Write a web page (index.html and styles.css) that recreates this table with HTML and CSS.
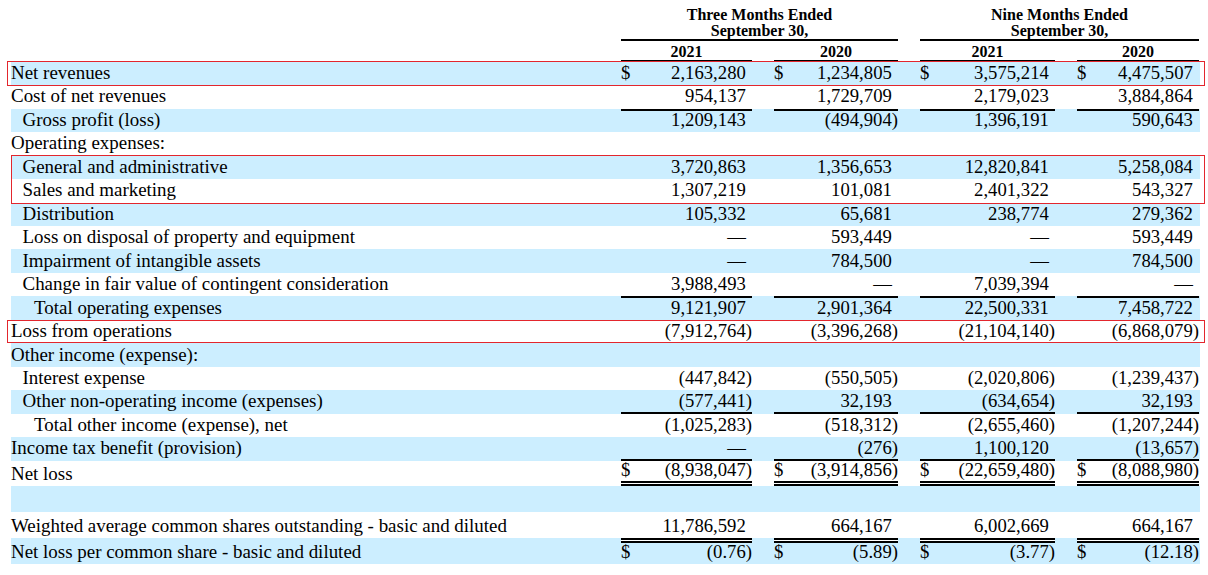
FILE: index.html
```html
<!DOCTYPE html>
<html lang="en">
<head>
<meta charset="utf-8">
<title>Condensed Consolidated Statements of Operations</title>
<link rel="stylesheet" href="styles.css">
</head>
<body>
<div class="sheet">
  <div class="row head">
    <div class="hd s1">Three Months Ended<br>September 30,</div>
    <div class="hd s2">Nine Months Ended<br>September 30,</div>
  </div>
  <div class="row years">
    <div class="yr c1">2021</div>
    <div class="yr c2">2020</div>
    <div class="yr c3">2021</div>
    <div class="yr c4">2020</div>
  </div>

  <div class="row shade box box-a">
    <div class="lbl">Net revenues</div>
    <div class="v c1"><span>$</span><span class="n">2,163,280</span></div>
    <div class="v c2"><span>$</span><span class="n">1,234,805</span></div>
    <div class="v c3"><span>$</span><span class="n">3,575,214</span></div>
    <div class="v c4"><span>$</span><span class="n">4,475,507</span></div>
  </div>
  <div class="row">
    <div class="lbl">Cost of net revenues</div>
    <div class="v c1"><span class="n">954,137</span></div>
    <div class="v c2"><span class="n">1,729,709</span></div>
    <div class="v c3"><span class="n">2,179,023</span></div>
    <div class="v c4"><span class="n">3,884,864</span></div>
  </div>
  <div class="row shade">
    <div class="lbl i1">Gross profit (loss)</div>
    <div class="v c1 lt"><span class="n">1,209,143</span></div>
    <div class="v c2 lt"><span class="n">(494,904<span class="rp">)</span></span></div>
    <div class="v c3 lt"><span class="n">1,396,191</span></div>
    <div class="v c4 lt"><span class="n">590,643</span></div>
  </div>
  <div class="row">
    <div class="lbl">Operating expenses:</div>
  </div>
  <div class="grp">
    <div class="row shade">
      <div class="lbl i1">General and administrative</div>
      <div class="v c1"><span class="n">3,720,863</span></div>
      <div class="v c2"><span class="n">1,356,653</span></div>
      <div class="v c3"><span class="n">12,820,841</span></div>
      <div class="v c4"><span class="n">5,258,084</span></div>
    </div>
    <div class="row">
      <div class="lbl i1">Sales and marketing</div>
      <div class="v c1"><span class="n">1,307,219</span></div>
      <div class="v c2"><span class="n">101,081</span></div>
      <div class="v c3"><span class="n">2,401,322</span></div>
      <div class="v c4"><span class="n">543,327</span></div>
    </div>
  </div>
  <div class="row shade">
    <div class="lbl i1">Distribution</div>
    <div class="v c1"><span class="n">105,332</span></div>
    <div class="v c2"><span class="n">65,681</span></div>
    <div class="v c3"><span class="n">238,774</span></div>
    <div class="v c4"><span class="n">279,362</span></div>
  </div>
  <div class="row">
    <div class="lbl i1">Loss on disposal of property and equipment</div>
    <div class="v c1"><span class="n">—</span></div>
    <div class="v c2"><span class="n">593,449</span></div>
    <div class="v c3"><span class="n">—</span></div>
    <div class="v c4"><span class="n">593,449</span></div>
  </div>
  <div class="row shade">
    <div class="lbl i1">Impairment of intangible assets</div>
    <div class="v c1"><span class="n">—</span></div>
    <div class="v c2"><span class="n">784,500</span></div>
    <div class="v c3"><span class="n">—</span></div>
    <div class="v c4"><span class="n">784,500</span></div>
  </div>
  <div class="row">
    <div class="lbl i1">Change in fair value of contingent consideration</div>
    <div class="v c1"><span class="n">3,988,493</span></div>
    <div class="v c2"><span class="n">—</span></div>
    <div class="v c3"><span class="n">7,039,394</span></div>
    <div class="v c4"><span class="n">—</span></div>
  </div>
  <div class="row shade">
    <div class="lbl i2">Total operating expenses</div>
    <div class="v c1 lt"><span class="n">9,121,907</span></div>
    <div class="v c2 lt"><span class="n">2,901,364</span></div>
    <div class="v c3 lt"><span class="n">22,500,331</span></div>
    <div class="v c4 lt"><span class="n">7,458,722</span></div>
  </div>
  <div class="row box box-c">
    <div class="lbl">Loss from operations</div>
    <div class="v c1"><span class="n">(7,912,764<span class="rp">)</span></span></div>
    <div class="v c2"><span class="n">(3,396,268<span class="rp">)</span></span></div>
    <div class="v c3"><span class="n">(21,104,140<span class="rp">)</span></span></div>
    <div class="v c4"><span class="n">(6,868,079<span class="rp">)</span></span></div>
  </div>
  <div class="row shade">
    <div class="lbl">Other income (expense):</div>
  </div>
  <div class="row">
    <div class="lbl i1">Interest expense</div>
    <div class="v c1"><span class="n">(447,842<span class="rp">)</span></span></div>
    <div class="v c2"><span class="n">(550,505<span class="rp">)</span></span></div>
    <div class="v c3"><span class="n">(2,020,806<span class="rp">)</span></span></div>
    <div class="v c4"><span class="n">(1,239,437<span class="rp">)</span></span></div>
  </div>
  <div class="row shade">
    <div class="lbl i1">Other non-operating income (expenses)</div>
    <div class="v c1 lb"><span class="n">(577,441<span class="rp">)</span></span></div>
    <div class="v c2 lb"><span class="n">32,193</span></div>
    <div class="v c3 lb"><span class="n">(634,654<span class="rp">)</span></span></div>
    <div class="v c4 lb"><span class="n">32,193</span></div>
  </div>
  <div class="row">
    <div class="lbl i2">Total other income (expense), net</div>
    <div class="v c1"><span class="n">(1,025,283<span class="rp">)</span></span></div>
    <div class="v c2"><span class="n">(518,312<span class="rp">)</span></span></div>
    <div class="v c3"><span class="n">(2,655,460<span class="rp">)</span></span></div>
    <div class="v c4"><span class="n">(1,207,244<span class="rp">)</span></span></div>
  </div>
  <div class="row shade">
    <div class="lbl">Income tax benefit (provision)</div>
    <div class="v c1 lb"><span class="n">—</span></div>
    <div class="v c2 lb"><span class="n">(276<span class="rp">)</span></span></div>
    <div class="v c3 lb"><span class="n">1,100,120</span></div>
    <div class="v c4 lb"><span class="n">(13,657<span class="rp">)</span></span></div>
  </div>
  <div class="row r-net">
    <div class="lbl">Net loss</div>
    <div class="v c1 dbl-in"><span>$</span><span class="n">(8,938,047<span class="rp">)</span></span></div>
    <div class="v c2 dbl-in"><span>$</span><span class="n">(3,914,856<span class="rp">)</span></span></div>
    <div class="v c3 dbl-in"><span>$</span><span class="n">(22,659,480<span class="rp">)</span></span></div>
    <div class="v c4 dbl-in"><span>$</span><span class="n">(8,088,980<span class="rp">)</span></span></div>
  </div>
  <div class="row shade r-blank"></div>
  <div class="row r-wt">
    <div class="lbl">Weighted average common shares outstanding - basic and diluted</div>
    <div class="v c1"><span class="n">11,786,592</span></div>
    <div class="v c2"><span class="n">664,167</span></div>
    <div class="v c3"><span class="n">6,002,669</span></div>
    <div class="v c4"><span class="n">664,167</span></div>
  </div>
  <div class="row shade r-eps">
    <div class="lbl">Net loss per common share - basic and diluted</div>
    <div class="v c1 dbl-top"><span>$</span><span class="n">(0.76<span class="rp">)</span></span></div>
    <div class="v c2 dbl-top"><span>$</span><span class="n">(5.89<span class="rp">)</span></span></div>
    <div class="v c3 dbl-top"><span>$</span><span class="n">(3.77<span class="rp">)</span></span></div>
    <div class="v c4 dbl-top"><span>$</span><span class="n">(12.18<span class="rp">)</span></span></div>
  </div>
</div>
</body>
</html>
```

FILE: styles.css
```css
* {
  box-sizing: border-box;
  margin: 0;
  padding: 0;
}

body {
  margin: 0;
  background: #ffffff;
  color: #000000;
  font-family: "Liberation Serif", "Times New Roman", serif;
}

.sheet {
  width: 1200px;
  padding: 6.7px 0 0 11px;
}

.row {
  display: grid;
  grid-template-columns: 610px 131px 22px 124px 22px 135px 22px 122px 1px;
  grid-template-rows: 100%;
  height: 23.47px;
  font-size: 18.7px;
  line-height: 21.5px;
}

.shade {
  background: #cceeff;
}

.lbl,
.v {
  padding-top: 0.2px;
  white-space: nowrap;
}

.lbl {
  grid-column: 1;
  font-size: 18.95px;
}

.i1 {
  padding-left: 11.5px;
}

.i2 {
  padding-left: 23px;
}

.v {
  display: flex;
  justify-content: space-between;
  padding-right: 6.2px;
}

.v .n {
  margin-left: auto;
}

.rp {
  margin-right: -6.2px;
}

.c1 { grid-column: 2; }
.c2 { grid-column: 4; }
.c3 { grid-column: 6; }
.c4 { grid-column: 8; }

/* rules */
.lt {
  box-shadow: inset 0 2px 0 #000;
}

.lb {
  box-shadow: inset 0 -2px 0 #000;
}

/* header */
.head {
  height: auto;
  font-size: 16px;
  line-height: 16px;
  font-weight: bold;
}

.hd {
  text-align: center;
  border-bottom: 2px solid #000;
}

.s1 { grid-column: 2 / 5; }
.s2 { grid-column: 6 / 9; }

.years {
  height: 21px;
  font-size: 16px;
  line-height: 16px;
  font-weight: bold;
}

.yr {
  text-align: center;
  padding-top: 3px;
  border-bottom: 2px solid #000;
}

/* bottom section */
.r-net {
  height: 25px;
}

.r-net .lbl {
  padding-top: 2.2px;
}

.r-net .v {
  padding-top: 0;
  line-height: 18px;
}

.dbl-in {
  box-shadow: inset 0 -2px 0 #000, inset 0 -3px 0 #fff, inset 0 -5px 0 #000;
}

.r-blank {
  height: 26.6px;
}

.r-wt {
  height: 25.4px;
}

.r-wt .lbl,
.r-wt .v {
  padding-top: 2.3px;
}

.r-eps {
  height: 26.6px;
}

.r-eps .lbl,
.r-eps .v {
  padding-top: 3.5px;
}

.dbl-top {
  box-shadow:
    inset 0 2px 0 #000,
    inset 0 3px 0 #fff,
    inset 0 5px 0 #000,
    0 2px 0 #000,
    0 3px 0 #fff,
    0 5px 0 #000;
}

/* highlight boxes */
.box,
.grp {
  position: relative;
}

.box::after,
.grp::after {
  content: "";
  position: absolute;
  z-index: 1;
  border: 1px solid #e3262d;
  pointer-events: none;
}

.box-a::after {
  top: -1px;
  bottom: -1px;
  left: -4px;
  right: -5px;
}

.grp::after {
  top: -0.5px;
  bottom: -1px;
  left: 0;
  right: -5px;
}

.box-c::after {
  top: 0;
  bottom: 0;
  left: -4px;
  right: -5px;
}
```
